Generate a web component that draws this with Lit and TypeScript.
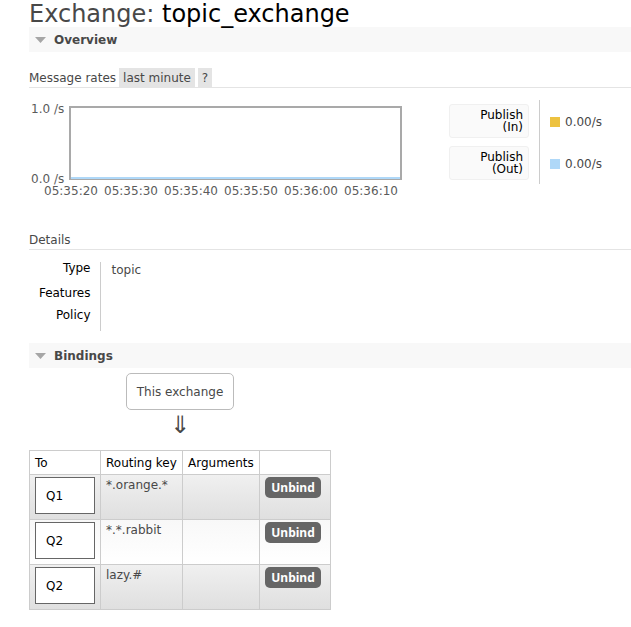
import { LitElement, html, css } from "lit";
import { customElement } from "lit/decorators.js";

const times = ["05:35:20", "05:35:30", "05:35:40", "05:35:50", "05:36:00", "05:36:10"];
const rates = [
  { direction: "(In)", tone: "gold" },
  { direction: "(Out)", tone: "sky" },
];
const details = [
  { name: "Type", value: "topic" },
  { name: "Features", value: "" },
  { name: "Policy", value: "" },
];
const bindings = [
  { queue: "Q1", key: "*.orange.*" },
  { queue: "Q2", key: "*.*.rabbit" },
  { queue: "Q2", key: "lazy.#" },
];

@customElement("app-root")
export class AppRoot extends LitElement {
  static styles = css`
    :host {
      display: block;
      padding-left: 29px;
      background: #fff;
      color: #484848;
      font: 12px/16px Verdana, "DejaVu Sans", sans-serif;
    }
    * { box-sizing: border-box; }
    button { font: inherit; color: inherit; border: 0; cursor: pointer; }
    a { color: inherit; text-decoration: none; }
    h1 { margin: 0; height: 27px; font-size: 24px; line-height: 29px; font-weight: 400; white-space: nowrap; }
    h1 b { color: #000; font-weight: 400; }
    h2 { margin: 0; font-size: 12px; }
    .toggle {
      display: flex;
      align-items: center;
      gap: 8px;
      width: 100%;
      height: 25px;
      padding: 0 6px;
      background: #f8f8f8;
      font-weight: 700;
    }
    .caret { width: 11px; height: 6px; fill: #a6a6a6; }
    h3 {
      display: flex;
      align-items: center;
      gap: 4px;
      height: 20px;
      margin: 0;
      border-bottom: 1px solid #e4e4e4;
      font-size: 12px;
      font-weight: 400;
    }
    .rates-title { margin-top: 16px; gap: 3px; }
    .chip { height: 19px; padding: 0 4px; background: #e4e4e4; }
    .stats { display: flex; padding-top: 12px; height: 142px; }
    .chart {
      display: grid;
      grid-template-columns: 40px 333px;
      grid-template-rows: 74px 24px;
      margin: 6px 47px 0 0;
      align-self: start;
      color: #5b5b5b;
    }
    .scale { display: flex; flex-direction: column; justify-content: space-between; height: 86px; margin-top: -5px; padding-left: 2px; white-space: nowrap; }
    .plot { display: flex; align-items: flex-end; border: 2px solid #a9a9a9; border-bottom-width: 1px; }
    .line { width: 100%; height: 2px; background: #afd8f8; }
    .times { grid-column: 1 / 3; display: grid; grid-template-columns: repeat(6, 1fr); margin: 3px 1px 0 12px; text-align: center; }
    .legend { border-collapse: collapse; height: 84px; }
    .legend th { width: 90px; height: 42px; padding: 0 10px 0 0; border-right: 1px solid #ccc; }
    .legend td { padding: 2px 0 0 10px; }
    .series {
      display: block;
      width: 80px;
      height: 34px;
      padding: 0 5px;
      border: 1px solid #f0f0f0;
      border-radius: 3px;
      background: #fafafa;
      color: #000;
      font-weight: 400;
      line-height: 12px;
      text-align: right;
    }
    .rate { display: flex; align-items: center; gap: 5px; }
    .swatch { width: 10px; height: 10px; }
    .gold { background: #edc240; }
    .sky { background: #afd8f8; }
    .facts { margin: 12px 0; border-collapse: collapse; }
    .facts th, .facts td { height: 22px; vertical-align: top; }
    .facts th { width: 71px; padding: 0 9px 0 0; border-right: 1px solid #ccc; color: #000; font-weight: 400; line-height: 12px; text-align: right; }
    .facts td { padding: 0 11px; }
    .facts tr:first-child > * { height: 25px; }
    .flow { display: inline-flex; flex-direction: column; align-items: center; padding-top: 5px; }
    .exchange { height: 37px; padding: 0 10px; border: 1px solid #bbb; border-radius: 5px; line-height: 36px; }
    .arrow { height: 40px; font-size: 24px; line-height: 30px; }
    .bindings { width: 302px; table-layout: fixed; border-collapse: collapse; }
    .bindings th, .bindings td { padding: 0 5px; border: 1px solid #ccc; text-align: left; white-space: nowrap; }
    .bindings th { height: 24px; color: #000; font-weight: 400; }
    .bindings td { height: 45px; padding-top: 2px; vertical-align: top; }
    .to { width: 71px; }
    .key { width: 82px; }
    .args { width: 77px; }
    .bindings tbody tr { background: linear-gradient(#f8f8f8, #fff); }
    .bindings tbody tr:nth-child(odd) { background: linear-gradient(#f0f0f0, #dfdfdf); }
    .queue { display: block; height: 37px; width: 60px; padding: 0 10px; border: 1px solid #666; background: #fff; color: #000; line-height: 36px; }
    .unbind { display: block; height: 21px; width: 56px; padding: 0 6px; border-radius: 5px; background: #666; color: #fff; font: 700 12px/20px "Noto Sans", sans-serif; }
  `;

  private heading(title: string) {
    return html`<h2><button class="toggle" aria-expanded="true">
      <svg class="caret" viewBox="0 0 11 6" aria-hidden="true"><path d="M0 0H11L5.5 6Z" /></svg>${title}
    </button></h2>`;
  }

  render() {
    return html`
      <h1>Exchange: <b>topic_exchange</b></h1>
      <section>
        ${this.heading("Overview")}
        <h3 class="rates-title">Message rates <button class="chip">last minute</button><button class="chip">?</button></h3>
        <div class="stats">
          <div class="chart">
            <div class="scale"><span>1.0 /s</span><span>0.0 /s</span></div>
            <div class="plot"><div class="line"></div></div>
            <div class="times">${times.map((t) => html`<span>${t}</span>`)}</div>
          </div>
          <table class="legend">
            ${rates.map((r) => html`<tr>
              <th scope="row"><button class="series">Publish<br />${r.direction}</button></th>
              <td><div class="rate"><span class="swatch ${r.tone}"></span>0.00/s</div></td>
            </tr>`)}
          </table>
        </div>
        <h3>Details</h3>
        <table class="facts">
          ${details.map((d) => html`<tr><th scope="row">${d.name}</th><td>${d.value}</td></tr>`)}
        </table>
      </section>
      <section>
        ${this.heading("Bindings")}
        <div class="graph">
          <div class="flow">
            <span class="exchange">This exchange</span>
            <span class="arrow">⇓</span>
            <table class="bindings">
              <thead><tr>
                <th class="to">To</th><th class="key">Routing key</th><th class="args">Arguments</th><th></th>
              </tr></thead>
              <tbody>
                ${bindings.map((b) => html`<tr>
                  <td><a class="queue" href="#">${b.queue}</a></td>
                  <td>${b.key}</td>
                  <td></td>
                  <td><button class="unbind">Unbind</button></td>
                </tr>`)}
              </tbody>
            </table>
          </div>
        </div>
      </section>
    `;
  }
}
